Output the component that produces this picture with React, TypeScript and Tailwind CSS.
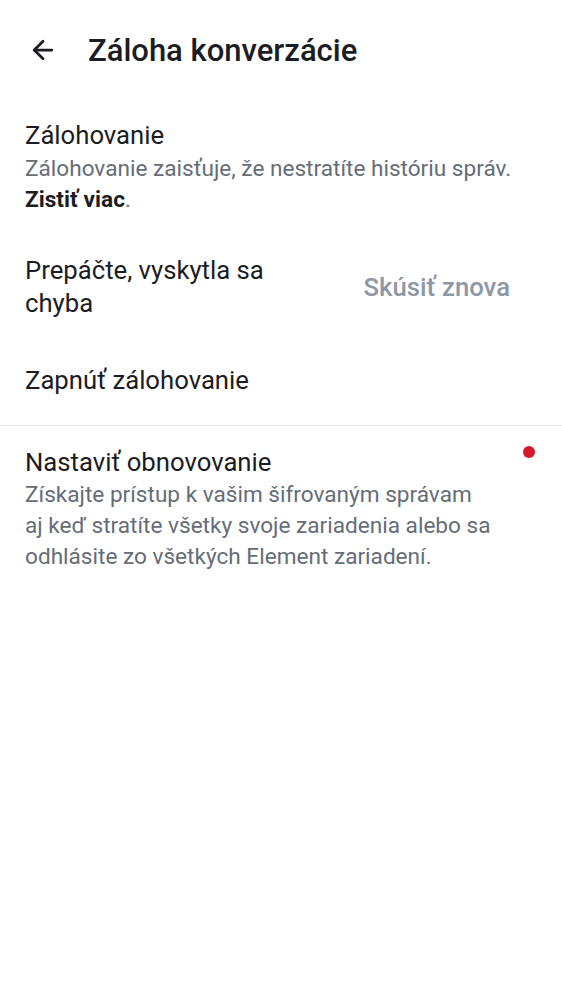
import React from 'react';
import { ArrowLeft } from 'lucide-react';

const App: React.FC = () => {
  return (
    <div
      className="w-[562px] h-[1000px] bg-white text-[#1b1d22]"
      style={{ fontFamily: 'Roboto, "Noto Sans", sans-serif' }}
    >
      {/* Top bar */}
      <div className="flex items-center h-[100px] pl-[28px]">
        <ArrowLeft className="w-[30px] h-[30px]" strokeWidth={2.2} />
        <h1 className="ml-[30px] text-[31px] font-medium leading-none">Záloha konverzácie</h1>
      </div>

      {/* Backup */}
      <div className="px-[25px] pt-[19px]">
        <div className="text-[25.7px] leading-[33px]">Zálohovanie</div>
        <p className="mt-px text-[22.6px] leading-[31px] text-[#656d77]">
          Zálohovanie zaisťuje, že nestratíte históriu správ.
          <br />
          <span className="font-bold text-[#1b1d22]">Zistiť viac</span>.
        </p>
      </div>

      {/* Error row */}
      <div className="flex items-center justify-between pl-[25px] pr-[52px] pt-[39px]">
        <div className="w-[290px] text-[25.7px] leading-[33px]">Prepáčte, vyskytla sa chyba</div>
        <button className="text-[25.7px] font-medium leading-[33px] text-[#8d97a5]">Skúsiť znova</button>
      </div>

      {/* Enable backup */}
      <div className="px-[25px] pt-[44px] pb-[28px]">
        <div className="text-[25.7px] leading-[33px]">Zapnúť zálohovanie</div>
      </div>

      <div className="h-px bg-[#e7e8ec]" />

      {/* Recovery */}
      <div className="relative px-[25px] pt-[19.5px]">
        <span className="absolute right-[27px] top-[20px] w-[12px] h-[12px] rounded-full bg-[#d51928]" />
        <div className="text-[25.7px] leading-[33px]">Nastaviť obnovovanie</div>
        <p className="text-[22.6px] leading-[31px] text-[#656d77]">
          Získajte prístup k vašim šifrovaným správam
          <br />
          aj keď stratíte všetky svoje zariadenia alebo sa
          <br />
          odhlásite zo všetkých Element zariadení.
        </p>
      </div>
    </div>
  );
};

export default App;
